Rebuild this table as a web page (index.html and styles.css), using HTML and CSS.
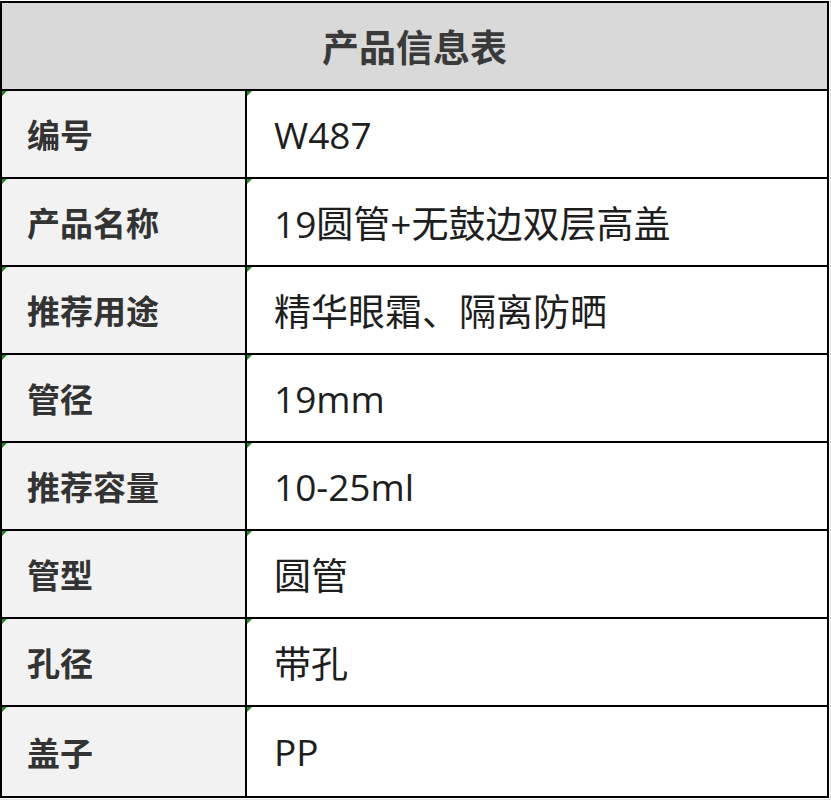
FILE: index.html
```html
<!DOCTYPE html>
<html lang="zh-CN">
<head>
<meta charset="utf-8">
<title>产品信息表</title>
<link rel="stylesheet" href="styles.css">
</head>
<body>
<div class="sheet">
  <div class="grid">
    <div class="head">产品信息表</div>
    <div class="label mark">编号</div><div class="value mark">W487</div>
    <div class="label mark">产品名称</div><div class="value mark">19圆管+无鼓边双层高盖</div>
    <div class="label mark">推荐用途</div><div class="value mark">精华眼霜、隔离防晒</div>
    <div class="label mark">管径</div><div class="value mark">19mm</div>
    <div class="label mark">推荐容量</div><div class="value mark">10-25ml</div>
    <div class="label mark">管型</div><div class="value mark">圆管</div>
    <div class="label mark">孔径</div><div class="value mark">带孔</div>
    <div class="label mark">盖子</div><div class="value mark">PP</div>
  </div>
</div>
</body>
</html>
```
FILE: styles.css
```css
html, body {
  margin: 0;
  padding: 0;
  background: #ffffff;
}
body {
  font-family: "Open Sans", "Noto Sans CJK SC", sans-serif;
}
.sheet {
  padding-top: 1px;
  padding-bottom: 1px;
  width: 830px;
  border-right: 1px solid #e4e4e4;
  border-bottom: 1px solid #e4e4e4;
}
.grid {
  width: 825px;
  display: grid;
  grid-template-columns: 243px 1fr;
  grid-template-rows: repeat(8, 86px) 89px;
  gap: 2px;
  padding: 2px;
  background: #000;
}
.head {
  grid-column: 1 / 3;
  background: #d9d9d9;
  color: #3a3a3a;
  font-family: "Noto Sans CJK SC", sans-serif;
  font-weight: 700;
  font-size: 37px;
  display: flex;
  align-items: center;
  justify-content: center;
}
.label, .value {
  position: relative;
  display: flex;
  align-items: center;
}
.label {
  background: #f2f2f2;
  color: #333333;
  font-family: "Noto Sans CJK SC", sans-serif;
  font-weight: 700;
  font-size: 33px;
  padding-left: 25px;
}
.value {
  background: #ffffff;
  color: #1e1e1e;
  font-size: 37px;
  padding-left: 27px;
}
.mark::before {
  content: "";
  position: absolute;
  left: 0;
  top: 0;
  border-top: 5px solid #1a8a1a;
  border-right: 5px solid transparent;
}
```
